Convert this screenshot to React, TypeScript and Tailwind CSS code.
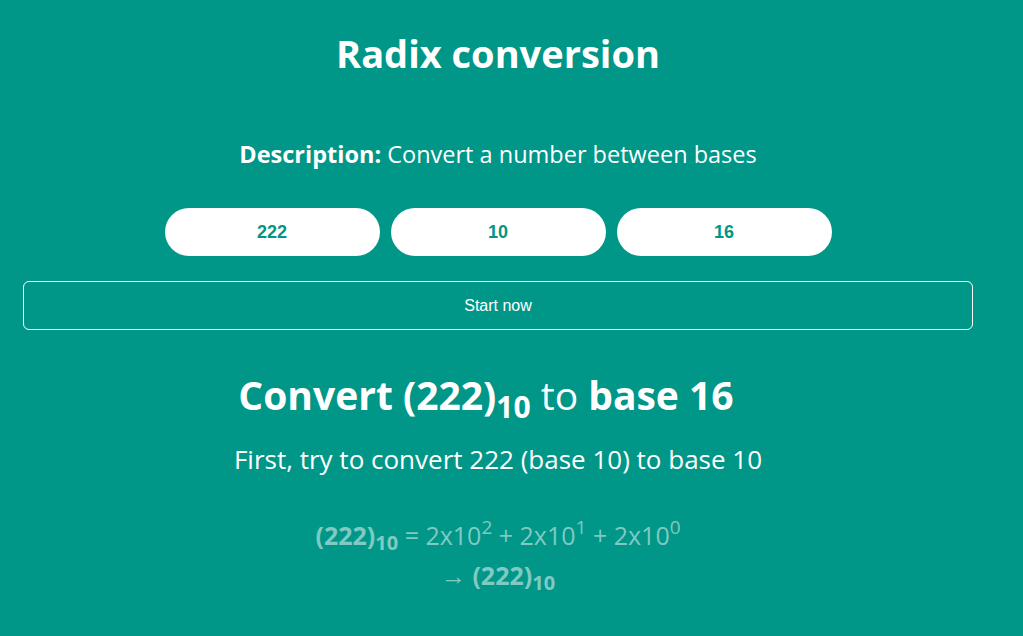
import React from "react";

export default function App() {
  const sans = { fontFamily: '"Open Sans", "Noto Sans", sans-serif' };
  return (
    <div className="min-h-[636px] w-full bg-[#009688] text-white" style={sans}>
      <div className="w-[996px] flex flex-col items-center">
        <h1 className="mt-[27px] text-[38px] font-bold leading-[52px]">Radix conversion</h1>
        <p className="mt-[60px] text-[23.5px] leading-[30px]">
          <span className="font-bold">Description:</span> Convert a number between bases
        </p>
        <div className="mt-[39px] flex gap-[11px]" style={{ fontFamily: '"Liberation Sans", Arial, sans-serif' }}>
          {["222", "10", "16"].map((v) => (
            <div
              key={v}
              className="w-[215px] h-[48px] rounded-full bg-white flex items-center justify-center text-[#009688] font-bold text-[18px]"
            >
              {v}
            </div>
          ))}
        </div>
        <div
          className="mt-[25px] w-[950px] h-[49px] border border-white rounded-[6px] flex items-center justify-center text-[16px]"
          style={{ fontFamily: '"Liberation Sans", Arial, sans-serif' }}
        >
          Start now
        </div>
        <h2 className="mt-[39px] pr-[24px] text-[39px] leading-[52px]">
          <span className="font-bold">
            Convert (222)<sub className="text-[30px]">10</sub>
          </span>{" "}
          to <span className="font-bold">base 16</span>
        </h2>
        <p className="mt-[21px] text-[26px] leading-[34px]">First, try to convert 222 (base 10) to base 10</p>
        <div className="mt-[39px] text-[25px] leading-[40px] text-white/50 text-center">
          <div>
            <span className="font-bold">
              (222)<sub className="text-[20px]">10</sub>
            </span>{" "}
            = 2x10<sup className="text-[19px] -top-[0.6em]">2</sup> + 2x10<sup className="text-[19px] -top-[0.6em]">1</sup> + 2x10
            <sup className="text-[19px] -top-[0.6em]">0</sup>
          </div>
          <div>
            →{" "}
            <span className="font-bold">
              (222)<sub className="text-[20px]">10</sub>
            </span>
          </div>
        </div>
      </div>
    </div>
  );
}
